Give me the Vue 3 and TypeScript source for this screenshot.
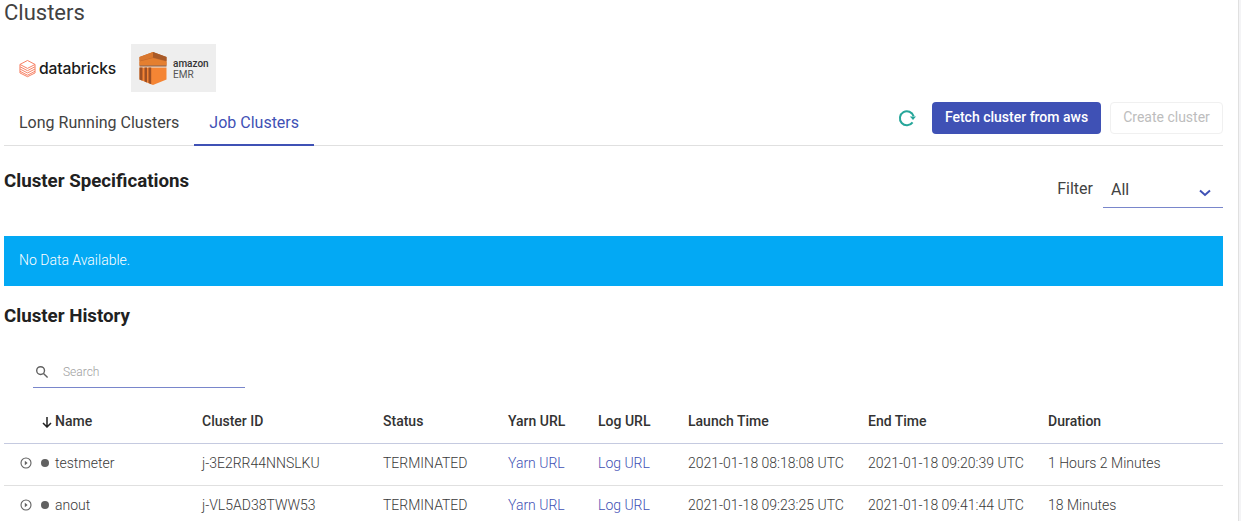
<script setup lang="ts">
interface Row { name: string; id: string; status: string; start: string; end: string; duration: string }
const heads: string[] = ['Cluster ID', 'Status', 'Yarn URL', 'Log URL', 'Launch Time', 'End Time', 'Duration']
const rows: Row[] = [
  { name: 'testmeter', id: 'j-3E2RR44NNSLKU', status: 'TERMINATED', start: '2021-01-18 08:18:08 UTC', end: '2021-01-18 09:20:39 UTC', duration: '1 Hours 2 Minutes' },
  { name: 'anout', id: 'j-VL5AD38TWW53', status: 'TERMINATED', start: '2021-01-18 09:23:25 UTC', end: '2021-01-18 09:41:44 UTC', duration: '18 Minutes' }
]
</script>

<template>
  <div class="page">
    <main class="content">
      <h1 class="title">Clusters</h1>
      <div class="logos">
        <div class="logo-db">
          <svg width="17" height="19" viewBox="0 0 18 19" fill="none" stroke="#f67f63" stroke-width="1.05">
            <path d="M9 1 17 5.2 9 9.4 1 5.2Z" />
            <path d="M1 5.2V7.6L9 11.8 17 7.6V5.2" />
            <path d="M1 7.6V10L9 14.2 17 10V7.6" />
            <path d="M1 10V12.4L9 16.6 17 12.4V10" />
            <path d="M1 12.4V14.2L9 18.2 17 14.2V12.4" />
          </svg>
          <span>databricks</span>
        </div>
        <div class="logo-emr">
          <svg width="28" height="33" viewBox="0 0 28 33">
            <path d="M14 0 27.5 5V13.5H.5V5Z" fill="#c0692c" />
            <path d="M14 0 27.5 5V9L14 5.5Z" fill="#a85a28" />
            <path d="M14 0 .5 5V9L14 5.5Z" fill="#d9772e" />
            <path d="M.5 9.5 14 6 27.5 9.5V13.5H.5Z" fill="#e47f30" />
            <path d="M.5 13.5H27.5V14.5H.5Z" fill="#8a4a22" />
            <path d="M.5 15.5H27.5V27.5L14 33 .5 27.5Z" fill="#f58534" />
            <path d="M.5 15.5H3.5V28.7L.5 27.5ZM5.5 15.5H8V30.5L5.5 29.5ZM9.5 15.5H12.2V32.2L9.5 31.1Z" fill="#9d5025" />
          </svg>
          <div class="emr-text"><b>amazon</b><span>EMR</span></div>
        </div>
      </div>
      <div class="tabbar">
        <div class="tab">Long Running Clusters</div>
        <div class="tab active">Job Clusters</div>
        <div class="actions">
          <svg class="refresh" width="20" height="20" viewBox="0 0 20 20" fill="none">
            <path d="M16.6 8.2A7 7 0 1 0 15.6 14.4" stroke="#26a69a" stroke-width="2" />
            <path d="M12.9 8.5H19L16 12Z" fill="#26a69a" />
          </svg>
          <button class="btn primary">Fetch cluster from aws</button>
          <button class="btn disabled">Create cluster</button>
        </div>
      </div>
      <div class="spec-head">
        <h2 class="section">Cluster Specifications</h2>
        <div class="filter">
          <span class="filter-label">Filter</span>
          <div class="select">
            <span>All</span>
            <svg width="12" height="8" viewBox="0 0 12 8" fill="none"><path d="M1 1.5 6 6 11 1.5" stroke="#3f51b5" stroke-width="2" /></svg>
          </div>
        </div>
      </div>
      <div class="alert">No Data Available.</div>
      <h2 class="section history">Cluster History</h2>
      <div class="search">
        <svg width="14" height="14" viewBox="0 0 14 14" fill="none" stroke="#616161" stroke-width="1.4">
          <circle cx="5.6" cy="5.6" r="3.9" /><path d="M8.5 8.5 12.6 12.6" />
        </svg>
        <span>Search</span>
      </div>
      <div class="row header">
        <div class="cell name-cell">
          <svg class="sort" width="10" height="11" viewBox="0 0 10 11" fill="none" stroke="#212121" stroke-width="1.5">
            <path d="M5 0V10M1 6 5 10 9 6" />
          </svg>
          <span>Name</span>
        </div>
        <div v-for="h in heads" :key="h" class="cell">{{ h }}</div>
      </div>
      <div v-for="r in rows" :key="r.id" class="row body">
        <div class="cell name-cell">
          <svg class="expand" width="12" height="12" viewBox="0 0 12 12" fill="none">
            <circle cx="6" cy="6" r="5" stroke="#616161" stroke-width="1.1" />
            <path d="M4.8 3.8 7.6 6 4.8 8.2Z" fill="#616161" />
          </svg>
          <i class="dot"></i>
          <span>{{ r.name }}</span>
        </div>
        <div class="cell">{{ r.id }}</div>
        <div class="cell">{{ r.status }}</div>
        <div class="cell link">Yarn URL</div>
        <div class="cell link">Log URL</div>
        <div class="cell">{{ r.start }}</div>
        <div class="cell">{{ r.end }}</div>
        <div class="cell">{{ r.duration }}</div>
      </div>
    </main>
    <div class="edge"></div>
  </div>
</template>

<style>
html, body { margin: 0; background: #fff; overflow: hidden; }
</style>

<style scoped>
.page { display: flex; width: 1241px; height: 521px; overflow: hidden; font-family: Roboto, "Liberation Sans", sans-serif; color: #424242; }
.content { width: 1219px; margin-left: 4px; flex: none; }
.edge { width: 3px; height: 521px; margin-left: 15px; background: #f4f4f6; border-left: 1px solid #e0e0e0; box-sizing: border-box; flex: none; }
.title { margin: 0; font-size: 22px; font-weight: 400; line-height: 26px; height: 44px; color: #424242; }
.logos { display: flex; height: 48px; }
.logo-db { width: 127px; display: flex; align-items: center; padding-left: 15px; box-sizing: border-box; gap: 3px; }
.logo-db span { font-family: Inter, sans-serif; font-size: 15.7px; font-weight: 500; color: #1b1b1b; letter-spacing: -0.2px; }
.logo-emr { width: 85px; background: #eeeeee; display: flex; align-items: center; padding-left: 8px; box-sizing: border-box; gap: 6px; }
.emr-text { display: flex; flex-direction: column; font-size: 10px; line-height: 11px; color: #333; margin-top: 1px; }
.emr-text b { font-weight: 500; }
.emr-text span { color: #555; }
.tabbar { display: flex; height: 53px; border-bottom: 1px solid #e0e0e0; }
.tab { padding: 7px 15px 0; display: flex; align-items: center; height: 100%; font-size: 16px; box-sizing: border-box; }
.tab.active { color: #3f51b5; border-bottom: 2px solid #3f51b5; height: 54px; padding-top: 9px; }
.actions { margin-left: auto; display: flex; align-items: center; height: 32px; margin-top: 10px; }
.refresh { margin-right: 15px; }
.btn { height: 32px; border-radius: 4px; font-family: inherit; font-size: 14px; font-weight: 500; padding: 0 0 2px; box-sizing: border-box; }
.primary { width: 169px; background: #3f51b5; color: #fff; border: none; margin-right: 9px; }
.disabled { width: 113px; background: #fff; color: #bdbdbd; border: 1px solid #f0f0f0; font-weight: 400; }
.spec-head { display: flex; justify-content: space-between; height: 90px; }
.section { margin: 0; font-size: 18.72px; font-weight: 700; line-height: 22px; color: #212121; }
.spec-head .section { margin-top: 24px; }
.filter { display: flex; align-items: flex-start; margin-top: 26px; }
.filter-label { font-size: 16px; line-height: 34px; margin-right: 10px; }
.select { width: 120px; height: 36px; border-bottom: 1px solid #7986cb; display: flex; justify-content: space-between; align-items: center; padding: 0 12px 0 8px; box-sizing: border-box; font-size: 16px; }
.select svg { margin-top: 7px; }
.alert { height: 50px; background: #03a9f4; color: #fff; font-size: 14px; font-weight: 300; line-height: 48px; padding-left: 15px; }
.history { margin-top: 19px; height: 34px; }
.search { width: 212px; margin-left: 29px; margin-top: 16px; height: 33px; padding-top: 1px; border-bottom: 1px solid #7986cb; display: flex; align-items: center; gap: 14px; padding-left: 2px; box-sizing: border-box; font-size: 12px; font-weight: 300; color: #9e9e9e; }
.row { display: grid; grid-template-columns: 198px 181px 125px 90px 90px 180px 180px 1fr; border-bottom: 1px solid #e0e0e0; align-items: center; font-size: 14px; font-weight: 300; color: #3a3a3a; }
.header { height: 56px; font-weight: 500; color: #333; border-bottom-color: #c5cae0; padding-top: 10px; box-sizing: border-box; }
.body { height: 42px; padding-bottom: 4px; box-sizing: border-box; }
.name-cell { display: flex; align-items: center; }
.sort { margin-left: 38px; margin-right: 3px; margin-top: 3px; }
.expand { margin-left: 16px; margin-right: 9px; }
.dot { width: 8px; height: 8px; border-radius: 50%; background: #616161; margin-right: 6px; }
.link { color: #3f51b5; }
</style>
